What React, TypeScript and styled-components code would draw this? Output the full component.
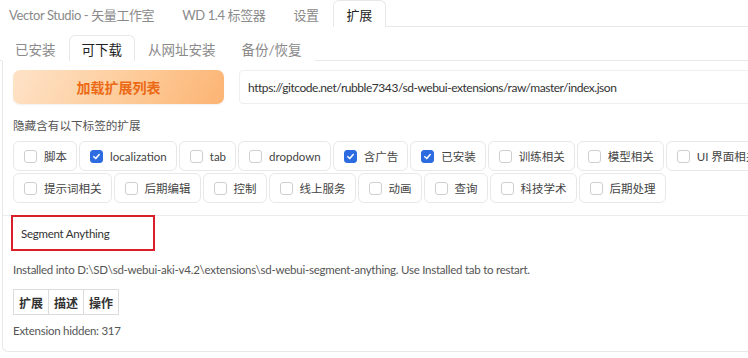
import React from 'react'
import styled, { createGlobalStyle } from 'styled-components'

const GlobalStyle = createGlobalStyle`
  body {
    margin: 0;
    background: #fff;
    overflow: hidden;
    font-family: Lato, "Noto Sans CJK SC", sans-serif;
  }
`

const topTabs = ['Vector Studio - 矢量工作室', 'WD 1.4 标签器', '设置', '扩展']
const subTabs = ['已安装', '可下载', '从网址安装', '备份/恢复']

const tags: { label: string; checked?: boolean }[] = [
    { label: '脚本' },
    { label: 'localization', checked: true },
    { label: 'tab' },
    { label: 'dropdown' },
    { label: '含广告', checked: true },
    { label: '已安装', checked: true },
    { label: '训练相关' },
    { label: '模型相关' },
    { label: 'UI 界面相关' },
    { label: '提示词相关' },
    { label: '后期编辑' },
    { label: '控制' },
    { label: '线上服务' },
    { label: '动画' },
    { label: '查询' },
    { label: '科技学术' },
    { label: '后期处理' },
]

export default function App() {
    return (
        <Page>
            <GlobalStyle />
            <TabBar>
                {topTabs.map((t) => (
                    <TopTab key={t} $active={t === '扩展'}>{t}</TopTab>
                ))}
            </TabBar>

            <SubTabBar>
                {subTabs.map((t) => (
                    <SubTab key={t} $active={t === '可下载'}>{t}</SubTab>
                ))}
            </SubTabBar>

            <Panel>
                <TopSection>
                    <ButtonRow>
                        <LoadButton type="button">加载扩展列表</LoadButton>
                        <UrlInput>https://gitcode.net/rubble7343/sd-webui-extensions/raw/master/index.json</UrlInput>
                    </ButtonRow>

                    <HideLabel>隐藏含有以下标签的扩展</HideLabel>

                    <CheckGroup>
                        {tags.map((tag) => (
                            <CheckItem key={tag.label}>
                                <Box $checked={tag.checked}>
                                    {tag.checked && (
                                        <svg width="9" height="9" viewBox="0 0 10 10">
                                            <path d="M2 5.2 L4.2 7.3 L8 2.8" fill="none" stroke="#fff" strokeWidth="1.7" strokeLinecap="round" strokeLinejoin="round" />
                                        </svg>
                                    )}
                                </Box>
                                {tag.label}
                            </CheckItem>
                        ))}
                    </CheckGroup>
                </TopSection>

                <ResultSection>
                    <SearchBox>Segment Anything</SearchBox>
                    <Info>Installed into D:\SD\sd-webui-aki-v4.2\extensions\sd-webui-segment-anything. Use Installed tab to restart.</Info>
                    <ExtTable>
                        <thead>
                            <tr>
                                <th>扩展</th>
                                <th>描述</th>
                                <th>操作</th>
                            </tr>
                        </thead>
                    </ExtTable>
                    <Info>Extension hidden: 317</Info>
                </ResultSection>
            </Panel>
        </Page>
    )
}

const Page = styled.div`
  width: 820px;
  height: 358px;
`

const TabBar = styled.div`
  display: flex;
  height: 27px;
  box-sizing: border-box;
  border-bottom: 1px solid #e8e8e8;
  margin-left: -5px;
`

const TopTab = styled.div<{ $active?: boolean }>`
  display: flex;
  align-items: center;
  height: 27px;
  margin-bottom: -1px;
  padding: 0 13px;
  box-sizing: border-box;
  font-size: 13px;
  letter-spacing: -0.4px;
  color: ${(p) => (p.$active ? '#222' : '#8a8a8a')};
  background: #fff;
  border: 1px solid ${(p) => (p.$active ? '#e8e8e8' : 'transparent')};
  border-bottom: none;
  border-radius: 6px 6px 0 0;
`

const SubTabBar = styled.div`
  display: flex;
  height: 26px;
  margin-top: 8px;
  padding-left: 2px;
  box-sizing: border-box;
  border-bottom: 1px solid #e8e8e8;
`

const SubTab = styled.div<{ $active?: boolean }>`
  display: flex;
  align-items: center;
  height: 26px;
  margin-bottom: -1px;
  padding: 0 12px;
  box-sizing: border-box;
  font-size: 13.5px;
  color: ${(p) => (p.$active ? '#222' : '#8a8a8a')};
  background: #fff;
  border: 1px solid ${(p) => (p.$active ? '#e8e8e8' : 'transparent')};
  border-bottom: none;
  border-radius: 6px 6px 0 0;
`

const Panel = styled.div`
  margin-left: 2px;
  height: 291px;
  box-sizing: border-box;
  border: 1px solid #e8e8e8;
  border-top: none;
  border-radius: 0 0 6px 6px;
`

const TopSection = styled.div`
  padding: 9px 10px 12px;
`

const ButtonRow = styled.div`
  display: flex;
  gap: 15px;
  height: 34px;
`

const LoadButton = styled.button`
  width: 211px;
  height: 34px;
  border: none;
  border-radius: 7px;
  background: linear-gradient(120deg, #fee3c8 0%, #fdcb99 55%, #fcb473 100%);
  box-shadow: 0 1px 2px rgba(0, 0, 0, 0.06);
  color: #ec6a17;
  font-family: "Noto Sans CJK SC", sans-serif;
  font-size: 14px;
  font-weight: 700;
`

const UrlInput = styled.div`
  flex: 1;
  display: flex;
  align-items: center;
  padding-left: 8px;
  border: 1px solid #efefef;
  border-radius: 4px;
  font-size: 12px;
  letter-spacing: -0.45px;
  color: #333;
`

const HideLabel = styled.div`
  margin-top: 13px;
  line-height: 18px;
  font-size: 11.6px;
  color: #555;
`

const CheckGroup = styled.div`
  display: flex;
  flex-wrap: wrap;
  gap: 2px 2px;
  margin-top: 6px;
`

const CheckItem = styled.label`
  display: flex;
  align-items: center;
  gap: 7px;
  height: 30px;
  padding: 0 9px 0 10px;
  box-sizing: border-box;
  border: 1px solid #e8e8e8;
  border-radius: 6px;
  font-size: 11.5px;
  color: #444;
`

const Box = styled.span<{ $checked?: boolean }>`
  display: flex;
  align-items: center;
  justify-content: center;
  width: 13px;
  height: 13px;
  box-sizing: border-box;
  border-radius: 3px;
  border: 1px solid ${(p) => (p.$checked ? '#2d6be0' : '#cfcfcf')};
  background: ${(p) => (p.$checked ? '#2d6be0' : '#fff')};
`

const ResultSection = styled.div`
  border-top: 1px solid #ececec;
  padding: 0 10px;
`

const SearchBox = styled.div`
  display: flex;
  align-items: center;
  width: 144px;
  height: 36px;
  margin: -1px 0 0 -2px;
  padding-left: 8px;
  box-sizing: border-box;
  border: 2px solid #d9202a;
  font-size: 11.5px;
  letter-spacing: -0.25px;
  color: #333;
`

const Info = styled.div`
  margin-top: 11px;
  line-height: 16px;
  font-size: 11.5px;
  letter-spacing: -0.25px;
  color: #555;

  table + & {
    margin-top: 8px;
  }
`

const ExtTable = styled.table`
  margin-top: 11px;
  border-collapse: collapse;

  th {
    height: 25px;
    padding: 0 5px;
    box-sizing: border-box;
    border: 1px solid #dcdcdc;
    font-size: 12px;
    font-weight: 700;
    color: #333;
  }
`
